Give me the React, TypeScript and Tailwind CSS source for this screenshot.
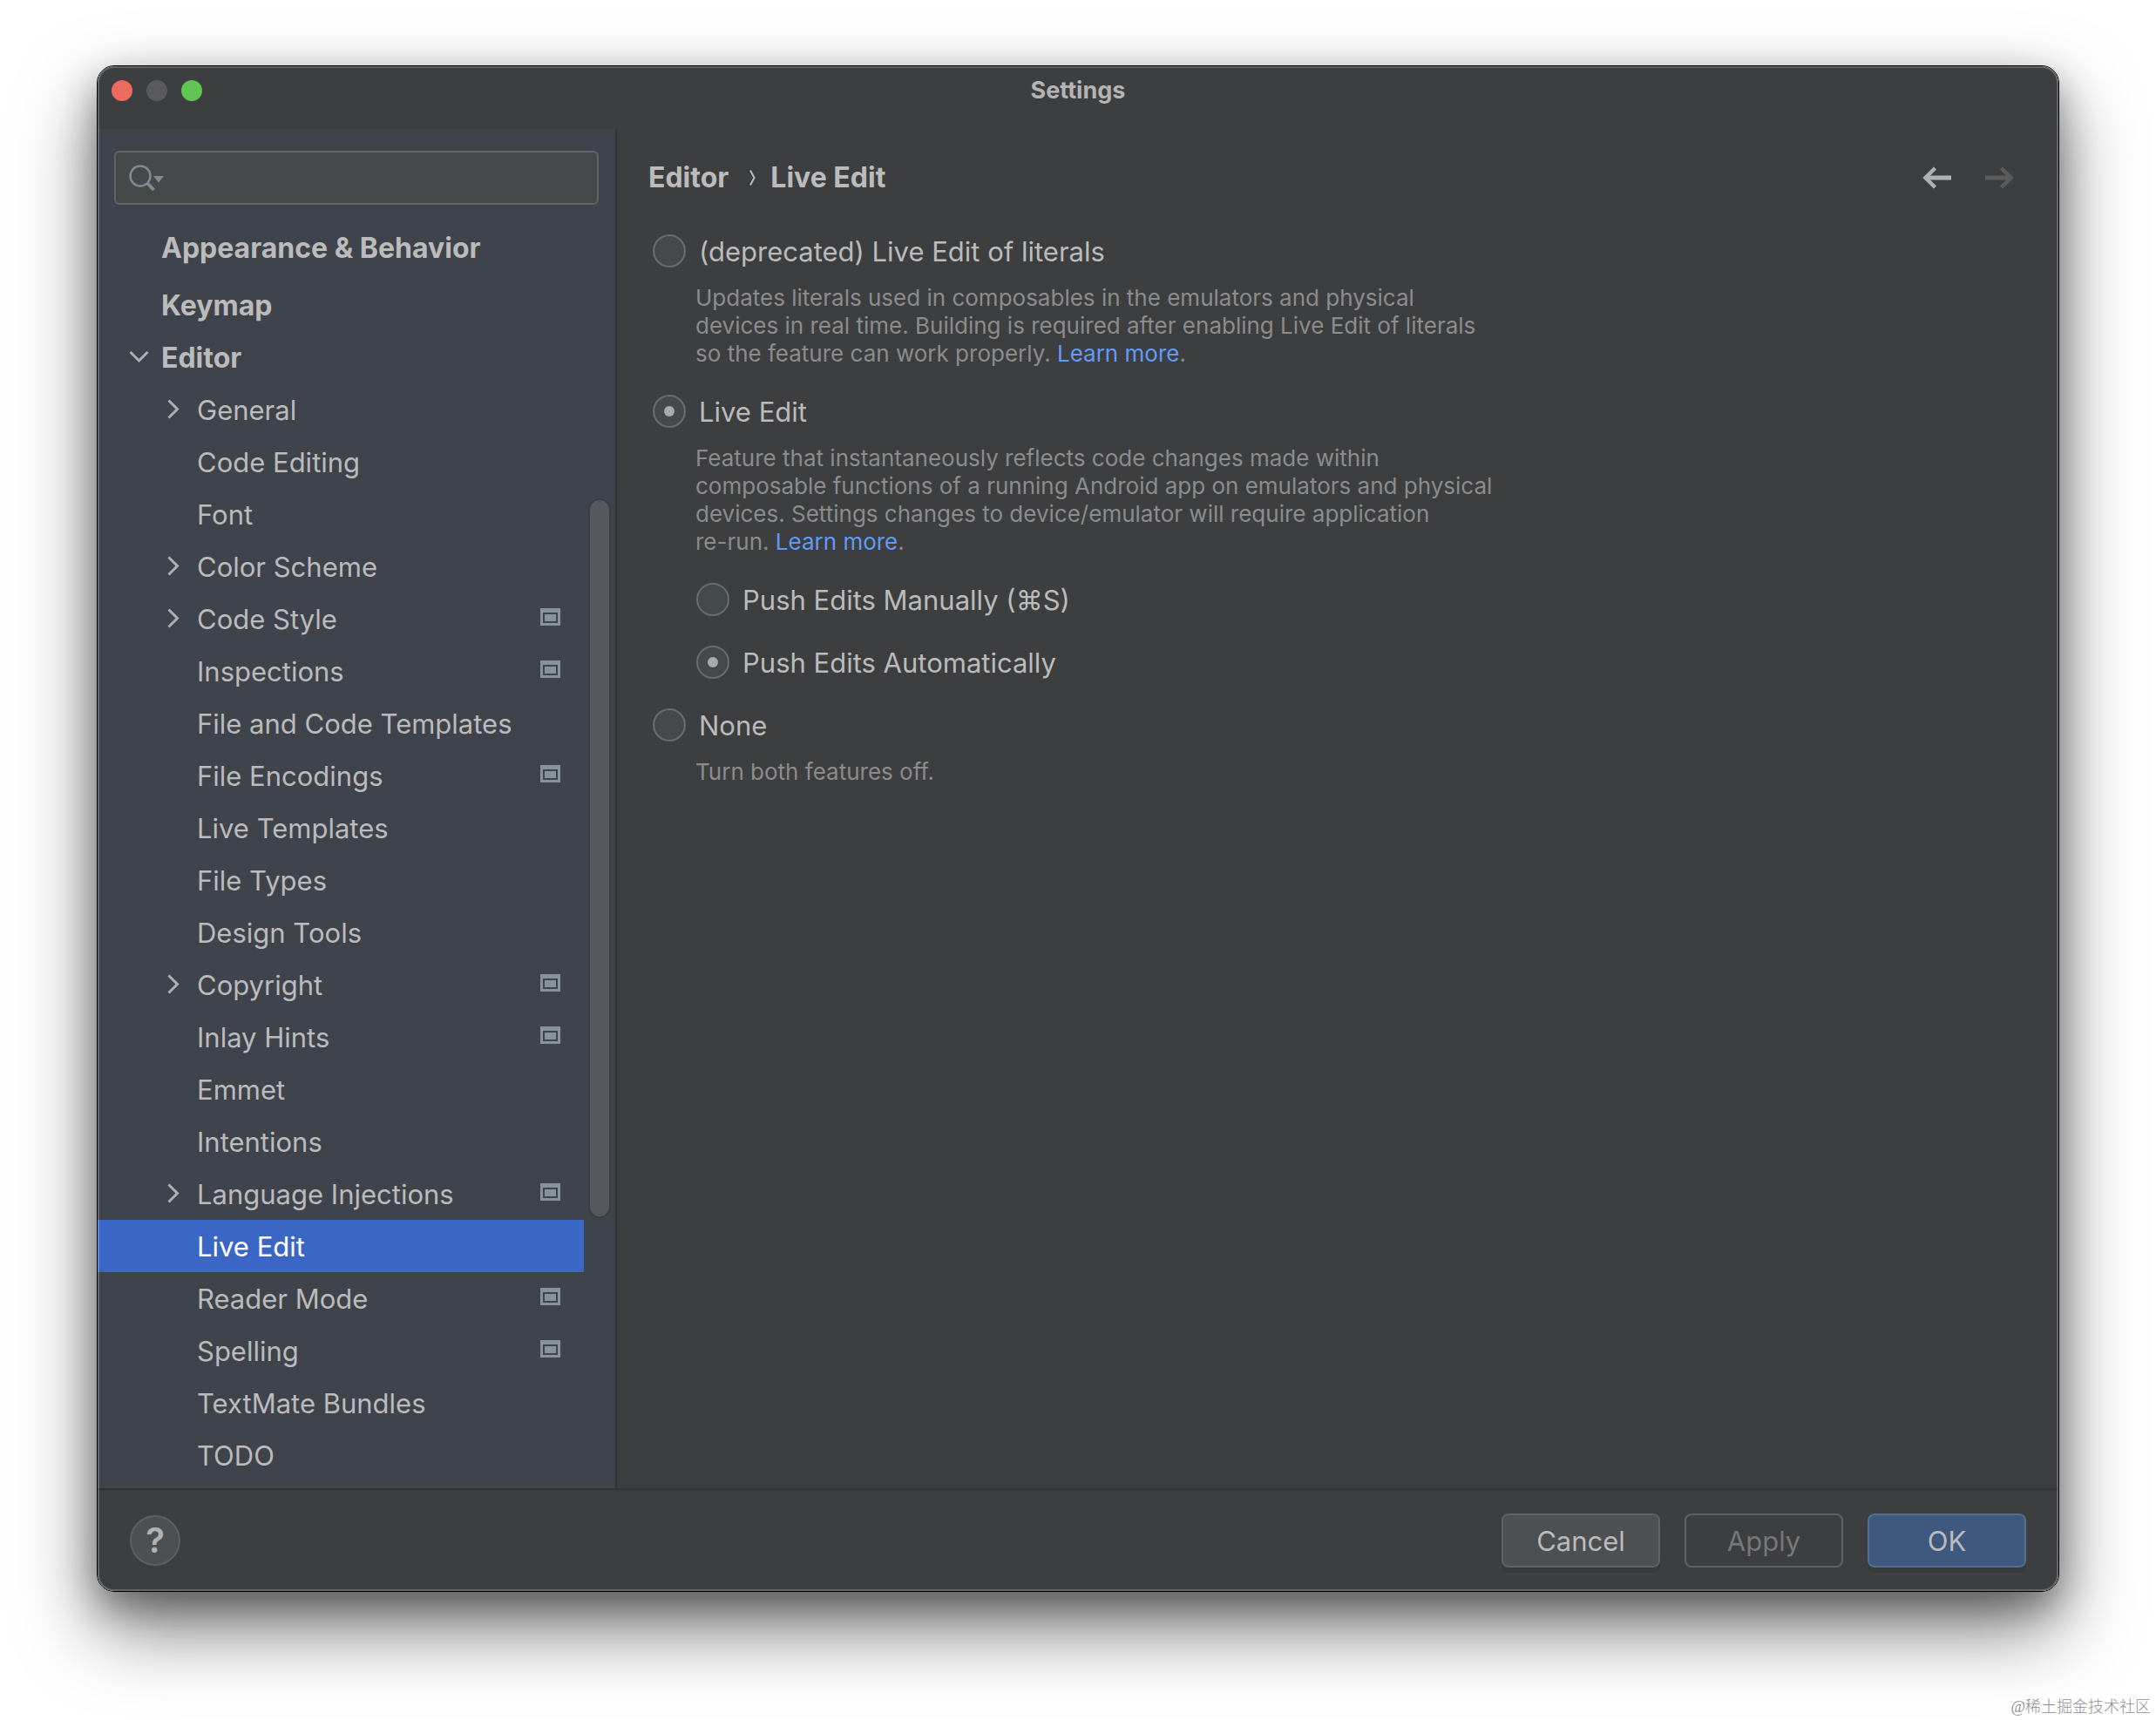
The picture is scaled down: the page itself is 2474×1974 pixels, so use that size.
const CJK_FONT = "font-['Liberation_Serif','Noto_Sans_CJK_SC',sans-serif]";

type TreeItem = {
  label: string;
  expandable?: boolean;
  perProject?: boolean;
  selected?: boolean;
};

const editorItems: TreeItem[] = [
  { label: "General", expandable: true },
  { label: "Code Editing" },
  { label: "Font" },
  { label: "Color Scheme", expandable: true },
  { label: "Code Style", expandable: true, perProject: true },
  { label: "Inspections", perProject: true },
  { label: "File and Code Templates" },
  { label: "File Encodings", perProject: true },
  { label: "Live Templates" },
  { label: "File Types" },
  { label: "Design Tools" },
  { label: "Copyright", expandable: true, perProject: true },
  { label: "Inlay Hints", perProject: true },
  { label: "Emmet" },
  { label: "Intentions" },
  { label: "Language Injections", expandable: true, perProject: true },
  { label: "Live Edit", selected: true },
  { label: "Reader Mode", perProject: true },
  { label: "Spelling", perProject: true },
  { label: "TextMate Bundles" },
  { label: "TODO" },
];

const ChevronRight = () => (
  <svg width="14" height="24" viewBox="0 0 14 24" fill="none" stroke="#adb0b3" strokeWidth="3" aria-hidden="true">
    <path d="M1.5 1.5 L11.5 11.5 L1.5 21.5" />
  </svg>
);

const ChevronDown = () => (
  <svg width="24" height="14" viewBox="0 0 24 14" fill="none" stroke="#adb0b3" strokeWidth="3" aria-hidden="true">
    <path d="M1.5 1 L11.5 11 L21.5 1" />
  </svg>
);

const SearchIcon = () => (
  <svg width="42" height="32" viewBox="0 0 42 32" fill="none" aria-hidden="true">
    <circle cx="13" cy="14" r="11.5" stroke="#7f8b91" strokeWidth="2.5" />
    <path d="M21 22 L28.5 30" stroke="#7f8b91" strokeWidth="4" />
    <path d="M28 14 H40 L34 21.5 Z" fill="#7f8b91" />
  </svg>
);

const ProjectIcon = () => (
  <svg width="23" height="24" viewBox="0 0 23 24" fill="#87939a" aria-hidden="true">
    <path fillRule="evenodd" d="M0 0 H23 V20 H0 Z M3 5 V17 H20 V5 Z" />
    <rect x="5" y="7" width="13" height="8" />
  </svg>
);

const BackArrow = () => (
  <svg width="34" height="26" viewBox="0 0 34 26" fill="none" stroke="currentColor" strokeWidth="5" aria-hidden="true">
    <path d="M33 13 H5" />
    <path d="M14.5 2 L3.5 13 L14.5 24" strokeWidth="4.5" />
  </svg>
);

const ForwardArrow = () => (
  <svg width="34" height="26" viewBox="0 0 34 26" fill="none" stroke="currentColor" strokeWidth="5" aria-hidden="true">
    <path d="M1 13 H29" />
    <path d="M19.5 2 L30.5 13 L19.5 24" strokeWidth="4.5" />
  </svg>
);

const TitleBar = () => (
  <header className="grid h-[72px] grid-cols-3 items-start px-4">
    <div className="flex gap-4 pt-4">
      <button aria-label="Close" className="size-6 rounded-full bg-[#ed6a5e]" />
      <button aria-label="Minimize" className="size-6 rounded-full bg-[#5a5a5c]" />
      <button aria-label="Zoom" className="size-6 rounded-full bg-[#61c454]" />
    </div>
    <h1 className="pt-2.5 text-center text-[27px] leading-9 font-bold text-[#b4b4b5]">Settings</h1>
  </header>
);

const Sidebar = () => (
  <aside className="flex w-[596px] shrink-0 flex-col border-r-2 border-[#343536] bg-[#3f434c] pb-2">
    <div className="px-[19px] pt-[25px] pb-[15px]">
      <label className="flex h-[62px] items-center rounded-md border-2 border-[#646363] bg-[#464949] pl-[15px]">
        <SearchIcon />
        <input type="text" aria-label="Search settings" className="h-full min-w-0 flex-1 bg-transparent px-2 text-[31px] text-[#bbbbbb] outline-none" />
      </label>
    </div>
    <div className="flex flex-1">
      <nav aria-label="Settings pages" className="flex-1">
        <ul className="text-[#bbbbbb]">
          <li>
            <button className="flex h-[70px] w-full items-center pl-[73px] text-[32px] font-bold">
              Appearance &amp; Behavior
            </button>
          </li>
          <li>
            <button className="flex h-[60px] w-full items-center pl-[73px] text-[32px] font-bold">
              <span className="pt-0.5">Keymap</span>
            </button>
          </li>
          <li>
            <button aria-expanded="true" className="flex h-[60px] w-full items-center pl-9 text-[32px] font-bold">
              <span className="w-[37px]">
                <ChevronDown />
              </span>
              <span className="pt-0.5">Editor</span>
            </button>
            <ul>
              {editorItems.map((item) => (
                <li key={item.label}>
                  <button
                    aria-expanded={item.expandable ? false : undefined}
                    className={`flex h-[60px] w-full items-center pr-[27px] pl-20 text-[31px] ${
                      item.selected ? "bg-[#3a67c5] text-white" : ""
                    }`}
                  >
                    <span className="w-[34px]">{item.expandable && <ChevronRight />}</span>
                    <span className="flex-1 pt-0.5 text-left">{item.label}</span>
                    {item.perProject && <ProjectIcon />}
                  </button>
                </li>
              ))}
            </ul>
          </li>
        </ul>
      </nav>
      <div className="w-9 pt-[322px] pl-[5px]">
        <div className="h-[826px] w-[26px] rounded-full border-2 border-[#3a3d42] bg-[#55595c]" />
      </div>
    </div>
  </aside>
);

type RadioRowProps = {
  name: string;
  label: string;
  checked?: boolean;
  nested?: boolean;
};

const RadioRow = ({ name, label, checked, nested }: RadioRowProps) => (
  <label className={`flex h-[72px] items-center gap-[15px] text-[31px] text-[#bbbbbb] ${nested ? "pl-[91px]" : "pl-[41px]"}`}>
    <input
      type="radio"
      name={name}
      defaultChecked={checked}
      className="grid size-[38px] shrink-0 appearance-none place-content-center rounded-full border-2 border-[#6a6c6d] bg-[#444949] before:size-3 before:rounded-full checked:before:bg-[#a9a9a9]"
    />
    <span className="pt-0.5">{label}</span>
  </label>
);

const Hint = ({ children }: { children: React.ReactNode }) => (
  <p className="pt-0.5 pb-3.5 pl-[90px] text-[26px] leading-8 text-[#8c8c8c]">{children}</p>
);

const LearnMore = () => (
  <a href="#learn-more" className="text-[#629bf4]">
    Learn more
  </a>
);

const LiveEditPage = () => (
  <main className="min-w-0 flex-1">
    <div className="flex items-center justify-between pt-[34px] pr-[51px] pb-[26px] pl-9">
      <nav aria-label="Breadcrumb" className="flex h-11 items-center text-[32px] font-bold text-[#bbbbbb]">
        <span>Editor</span>
        <svg className="mr-4 ml-6" width="8" height="20" viewBox="0 0 8 20" fill="none" stroke="#bbbbbb" strokeWidth="2" aria-hidden="true">
          <path d="M1 1.5 L5.5 10 L1 18.5" />
        </svg>
        <span>Live Edit</span>
      </nav>
      <div className="flex gap-[37px]">
        <button aria-label="Back" className="text-[#afb1b3]">
          <BackArrow />
        </button>
        <button aria-label="Forward" disabled className="text-[#5b5b5c]">
          <ForwardArrow />
        </button>
      </div>
    </div>

    <RadioRow name="mode" label="(deprecated) Live Edit of literals" />
    <Hint>
      Updates literals used in composables in the emulators and physical
      <br />
      devices in real time. Building is required after enabling Live Edit of literals
      <br />
      so the feature can work properly. <LearnMore />.
    </Hint>

    <RadioRow name="mode" label="Live Edit" checked />
    <Hint>
      Feature that instantaneously reflects code changes made within
      <br />
      composable functions of a running Android app on emulators and physical
      <br />
      devices. Settings changes to device/emulator will require application
      <br />
      re-run. <LearnMore />.
    </Hint>
    <RadioRow name="push" label="Push Edits Manually (⌘S)" nested />
    <RadioRow name="push" label="Push Edits Automatically" checked nested />

    <RadioRow name="mode" label="None" />
    <Hint>Turn both features off.</Hint>
  </main>
);

const Footer = () => (
  <footer className="flex items-center justify-between border-t-2 border-[#323334] px-[37px] py-[27px]">
    <button
      aria-label="Help"
      className="flex size-[58px] items-center justify-center rounded-full border-2 border-[#5d6061] bg-[#4c5052] text-[40px] font-semibold text-[#afb1b3]"
    >
      ?
    </button>
    <div className="flex gap-7 text-[31px]">
      <button className="h-[62px] w-[182px] rounded-lg border-2 border-[#5f6162] bg-[#4c5052] pt-0.5 text-[#bbbbbb] shadow-[0_6px_0_#38393b]">
        Cancel
      </button>
      <button disabled className="h-[62px] w-[182px] rounded-lg border-2 border-[#5f6061] pt-0.5 text-[#777777]">
        Apply
      </button>
      <button className="h-[62px] w-[182px] rounded-lg border-2 border-[#50708e] bg-[#3e587e] pt-0.5 text-[#bbbbbb] shadow-[0_6px_0_#38393b]">
        OK
      </button>
    </div>
  </footer>
);

export default function App() {
  return (
    <div className="flex min-h-screen flex-col bg-white font-['Inter','Noto_Sans',sans-serif]">
      <div className="px-[111px] pt-[75px]">
        <div className="rounded-[20px] border border-black shadow-[0_40px_88px_rgba(0,0,0,0.55),0_16px_40px_rgba(0,0,0,0.3)]">
          <div className="relative overflow-hidden rounded-[19px] bg-[#3d3e40] after:pointer-events-none after:absolute after:inset-0 after:rounded-[19px] after:border-2 after:border-white/20">
            <TitleBar />
            <div className="flex">
              <Sidebar />
              <LiveEditPage />
            </div>
            <Footer />
          </div>
        </div>
      </div>
      <p className={`mt-auto pr-1.5 pb-[3px] text-right text-[18px] leading-6 font-light text-[#8f8f8f] ${CJK_FONT}`}>
        @稀土掘金技术社区
      </p>
    </div>
  );
}
